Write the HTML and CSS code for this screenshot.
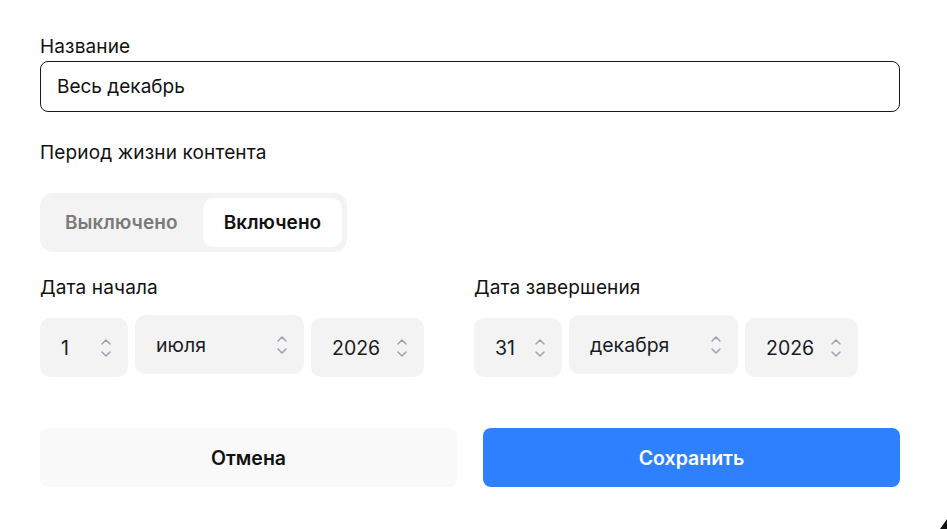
FILE: index.html
```html
<!DOCTYPE html>
<html lang="ru">
<head>
    <meta charset="UTF-8">
    <meta name="viewport" content="width=device-width, initial-scale=1.0">
    <title>Период жизни контента</title>
    <link rel="stylesheet" href="styles.css">
</head>
<body>
    <form class="form">
        <div class="field">
            <label class="label" for="name">Название</label>
            <input class="text-input" id="name" type="text" value="Весь декабрь">
        </div>

        <p class="label period-label">Период жизни контента</p>

        <div class="switch">
            <button type="button" class="switch-option">Выключено</button>
            <button type="button" class="switch-option active">Включено</button>
        </div>

        <div class="dates">
            <div class="date-group">
                <p class="label">Дата начала</p>
                <div class="date-selects">
                    <div class="select select-day"><span>1</span><span class="chevrons"></span></div>
                    <div class="select select-month raised"><span>июля</span><span class="chevrons"></span></div>
                    <div class="select select-year"><span>2026</span><span class="chevrons"></span></div>
                </div>
            </div>
            <div class="date-group">
                <p class="label">Дата завершения</p>
                <div class="date-selects">
                    <div class="select select-day"><span>31</span><span class="chevrons"></span></div>
                    <div class="select select-month raised"><span>декабря</span><span class="chevrons"></span></div>
                    <div class="select select-year"><span>2026</span><span class="chevrons"></span></div>
                </div>
            </div>
        </div>

        <div class="actions">
            <button type="button" class="btn btn-cancel">Отмена</button>
            <button type="button" class="btn btn-save">Сохранить</button>
        </div>
    </form>
    <div class="corner"></div>

    <script>
        // same up/down chevron icon in every select
        const icon = '<svg width="12" height="22" viewBox="0 0 12 22" fill="none" stroke="#9ca1ab" stroke-width="1.5" stroke-linecap="round" stroke-linejoin="round"><path d="M2 7 6 3l4 4"/><path d="M2 15l4 4 4-4"/></svg>';
        document.querySelectorAll('.chevrons').forEach(el => el.innerHTML = icon);
    </script>
</body>
</html>
```

FILE: styles.css
```css
* {
    box-sizing: border-box;
}

body {
    margin: 0;
    font-family: Inter, "Noto Sans", sans-serif;
    color: #111;
    background-color: #fff;
    overflow: hidden;
}

.form {
    width: 860px;
    margin: 0 0 0 40px;
    padding-top: 35px;
}

.label {
    display: block;
    margin: 0;
    font-size: 19px;
    line-height: 24px;
    letter-spacing: 0.15px;
    color: #111;
}

.text-input {
    display: block;
    width: 100%;
    height: 51px;
    margin-top: 2px;
    padding: 0 16px;
    border: 1px solid #1a1a1a;
    border-radius: 8px;
    font-family: inherit;
    font-size: 19px;
    color: #111;
}

.period-label {
    margin-top: 29px;
}

.switch {
    display: inline-flex;
    gap: 5px;
    margin-top: 28px;
    padding: 5px;
    background-color: #f3f3f3;
    border-radius: 13px;
}

.switch-option {
    height: 49px;
    padding: 0 20px;
    border: none;
    border-radius: 10px;
    background: none;
    font-family: inherit;
    font-size: 19px;
    font-weight: 600;
    letter-spacing: 0.1px;
    color: #7a7a7a;
}

.switch-option.active {
    padding: 0 21px;
    background-color: #fff;
    color: #111;
}

.dates {
    display: grid;
    grid-template-columns: 1fr 1fr;
    gap: 8px;
    margin-top: 24px;
}

.date-selects {
    display: flex;
    align-items: flex-start;
    gap: 7px;
    margin-top: 18px;
}

.select {
    display: flex;
    align-items: center;
    justify-content: space-between;
    height: 59px;
    padding: 0 16px 0 21px;
    background-color: #f3f3f3;
    border-radius: 10px;
    font-size: 19.5px;
    color: #1a1c25;
}

.select.raised {
    margin-top: -3px;
}

.select-day {
    width: 88px;
}

.select-month {
    width: 169px;
}

.select-year {
    width: 113px;
}

.chevrons {
    display: flex;
}

.actions {
    display: grid;
    grid-template-columns: 1fr 1fr;
    gap: 26px;
    margin-top: 51px;
}

.btn {
    height: 59px;
    border: none;
    border-radius: 8px;
    font-family: inherit;
    font-size: 19.5px;
    font-weight: 600;
}

.btn-cancel {
    background-color: #f9f9f9;
    color: #111;
}

.btn-save {
    background-color: #2f80ff;
    color: #fff;
}

.corner {
    position: absolute;
    right: 0;
    bottom: 0;
    width: 0;
    height: 0;
    border-left: 7px solid transparent;
    border-bottom: 10px solid #111;
}
```
